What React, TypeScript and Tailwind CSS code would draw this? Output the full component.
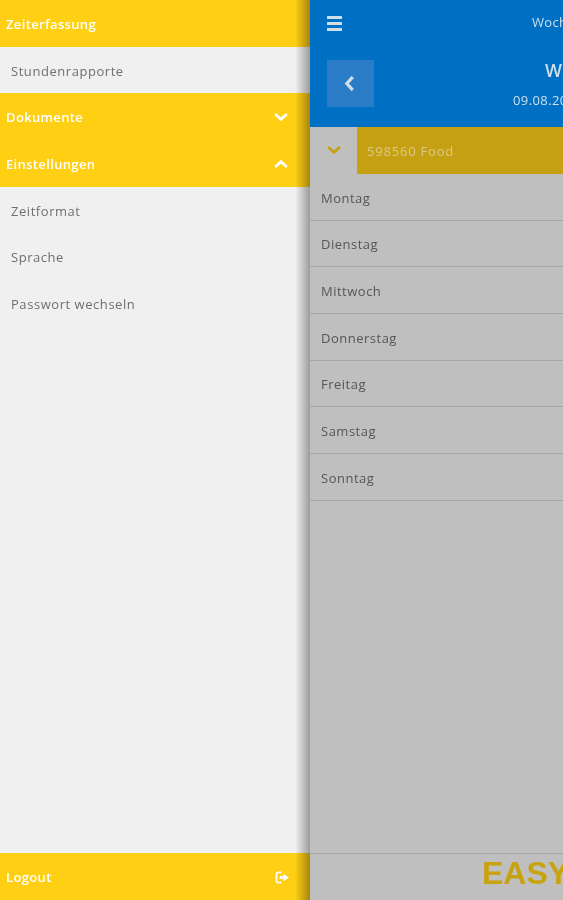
import React from "react";

function Chevron({ up, className }: { up?: boolean; className: string }) {
  return (
    <svg viewBox="0 0 14 9" className={className} fill="none" stroke="currentColor" strokeWidth="2.8" strokeLinecap="square" strokeLinejoin="miter">
      <path d={up ? "M2.2 7 L7 2.6 L11.8 7" : "M2.2 2 L7 6.4 L11.8 2"} />
    </svg>
  );
}

function YellowRow({ label, icon }: { label: string; icon?: React.ReactNode }) {
  return (
    <div className="h-[46.67px] flex items-center justify-between pl-[6px] pr-[22px] bg-[#ffcf13] text-white text-[13px] font-semibold tracking-[0.35px]">
      <span className="pt-[2px]">{label}</span>
      {icon}
    </div>
  );
}

function SubRow({ label }: { label: string }) {
  return (
    <div className="h-[46.67px] flex items-center pl-[11px] pt-[3px] text-[13px] text-[#6f6f6f] tracking-[0.55px]">{label}</div>
  );
}

function DayRow({ label }: { label: string }) {
  return (
    <div className="h-[46.67px] flex items-center pl-[11px] pt-[3px] text-[13px] text-[#565656] tracking-[0.5px] border-b border-[#a6a6a6]">{label}</div>
  );
}

export default function App() {
  const days = ["Montag", "Dienstag", "Mittwoch", "Donnerstag", "Freitag", "Samstag", "Sonntag"];
  return (
    <div className="w-[563px] h-[900px] overflow-hidden flex font-['Open_Sans',sans-serif] bg-[#bfbfbf] blur-[0.7px]">
      <aside className="relative z-10 w-[310px] shrink-0 h-full flex flex-col bg-[#f0f0f0]">
        <YellowRow label="Zeiterfassung" />
        <SubRow label="Stundenrapporte" />
        <YellowRow label="Dokumente" icon={<Chevron className="w-[14px] h-[9px] shrink-0 mt-[1px]" />} />
        <YellowRow label="Einstellungen" icon={<Chevron up className="w-[14px] h-[9px] shrink-0" />} />
        <SubRow label="Zeitformat" />
        <SubRow label="Sprache" />
        <SubRow label="Passwort wechseln" />
        <div className="mt-auto">
          <YellowRow
            label="Logout"
            icon={
              <svg viewBox="0 0 16 14" className="w-[15px] h-[13px] -mr-[2px] shrink-0 mt-[2px]" fill="none" stroke="currentColor">
                <path d="M7 1.5 H3.5 A2 2 0 0 0 1.5 3.5 V10.5 A2 2 0 0 0 3.5 12.5 H7" strokeWidth="2" />
                <path d="M5 5.5 H9 V3 L15 7 L9 11 V8.5 H5 Z" fill="currentColor" stroke="none" />
              </svg>
            }
          />
        </div>
        <div className="absolute inset-y-0 right-0 w-[15px] bg-gradient-to-r from-transparent to-black/35" />
      </aside>
      <main className="w-[253px] shrink-0 h-full flex flex-col overflow-hidden">
        <header className="h-[127px] bg-[#0070c4] text-[#d3dfe8] shrink-0 flex flex-col">
          <div className="h-[46px] flex items-center pl-[17px]">
            <svg viewBox="0 0 15 15" className="w-[15px] h-[15px] shrink-0" fill="currentColor">
              <rect x="0" y="0" width="15" height="3" rx="0.5" />
              <rect x="0" y="6" width="15" height="3" rx="0.5" />
              <rect x="0" y="12" width="15" height="3" rx="0.5" />
            </svg>
            <span className="ml-[190px] text-[13px] whitespace-nowrap tracking-[0.3px] -mt-[1px]">Wochenrapport</span>
          </div>
          <div className="flex pl-[17px] pt-[14px]">
            <div className="w-[47px] h-[47px] shrink-0 bg-[#2a7cc6] flex items-center justify-center">
              <svg viewBox="0 0 9 14" className="w-[10px] h-[15px] shrink-0 -ml-[3px]" fill="none" stroke="currentColor" strokeWidth="3" strokeLinecap="square">
                <path d="M7 2 L2.5 7 L7 12" />
              </svg>
            </div>
            <div className="ml-[139px] flex flex-col whitespace-nowrap items-start shrink-0">
              <span className="ml-[32px] -mt-[2px] text-[18px] font-semibold leading-[24px]">Woche 32</span>
              <span className="text-[13px] mt-[9px] leading-[18px] tracking-[0.4px]">09.08.2021</span>
            </div>
          </div>
        </header>
        <div className="h-[47px] flex shrink-0">
          <div className="w-[47px] flex items-center justify-center text-[#c4a012]">
            <Chevron className="w-[14px] h-[9px] shrink-0" />
          </div>
          <div className="flex-1 bg-[#c4a012] flex items-center pl-[10px] pt-[2px] text-[13px] text-[#dac98a] tracking-[0.8px]">598560 Food</div>
        </div>
        {days.map((d) => (
          <DayRow key={d} label={d} />
        ))}
        <div className="mt-auto h-[47px] border-t border-[#a6a6a6] pl-[172px] flex items-center shrink-0">
          <span className="font-['Liberation_Sans',sans-serif] font-bold text-[32px] text-[#c9a30f] whitespace-nowrap -mt-[8px]">EASYZEIT</span>
        </div>
      </main>
    </div>
  );
}
